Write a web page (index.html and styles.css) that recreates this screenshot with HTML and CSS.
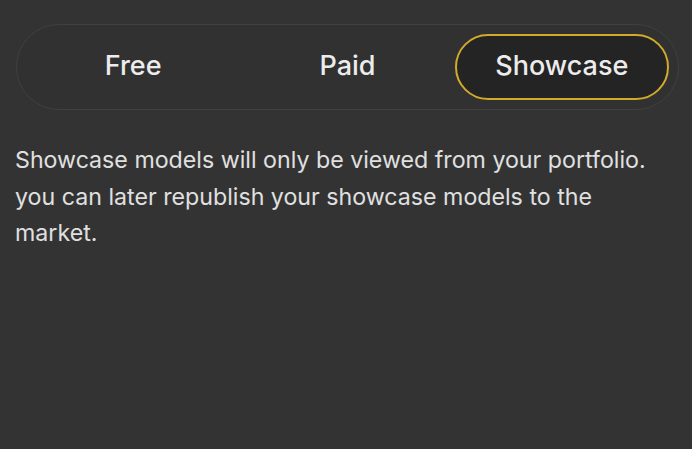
FILE: index.html
```html
<!DOCTYPE html>
<html lang="en">
<head>
<meta charset="utf-8">
<link rel="stylesheet" href="styles.css">
</head>
<body>
<div class="page">
  <div class="tabs">
    <div class="tab">Free</div>
    <div class="tab">Paid</div>
    <div class="tab active">Showcase</div>
  </div>
  <p class="note">Showcase models will only be viewed from your portfolio. you can later republish your showcase models to the market.</p>
</div>
</body>
</html>
```
FILE: styles.css
```css
html, body {
  margin: 0;
  padding: 0;
  background: #333333;
  height: 100%;
}
body {
  font-family: Inter, "Noto Sans", sans-serif;
  color: #e6e6e6;
}
.page {
  padding: 24px 13px 0 16px;
}
.tabs {
  box-sizing: border-box;
  width: 663px;
  height: 86px;
  border: 1.5px solid #404040;
  border-radius: 43px;
  background: #313131;
  padding: 9px;
  display: grid;
  grid-template-columns: 1fr 1fr 1fr;
}
.tab {
  display: flex;
  align-items: center;
  justify-content: center;
  font-size: 27px;
  font-weight: 500;
  color: #ececec;
  border-radius: 34px;
  border: 2px solid transparent;
  padding-bottom: 3px;
}
.tab.active {
  border-color: #d1aa2c;
  background: #242424;
}
.note {
  margin: 32px 0 0 -1px;
  font-size: 23.2px;
  line-height: 36.5px;
  color: #e0e0e0;
  max-width: 650px;
}
```
